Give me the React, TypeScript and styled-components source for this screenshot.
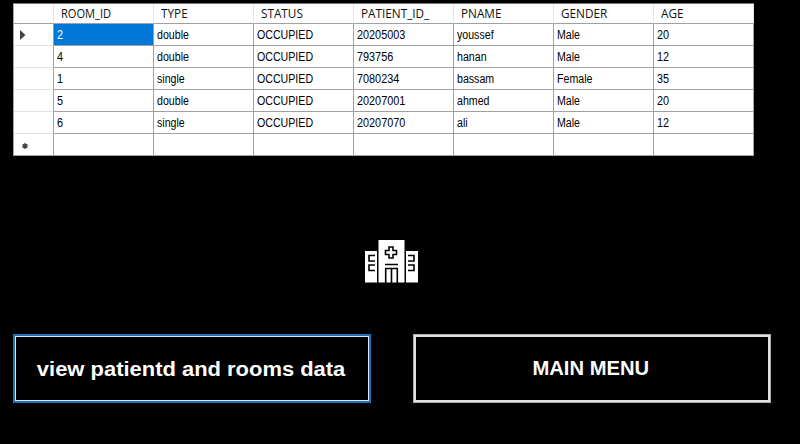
import React from 'react';
import styled, { createGlobalStyle } from 'styled-components';

const GlobalStyle = createGlobalStyle`
  body { margin: 0; background: #000; overflow: hidden; }
`;

const Page = styled.main`
  box-sizing: border-box;
  width: 800px;
  height: 444px;
  padding: 3px 0 0 13px;
  display: flex;
  flex-direction: column;
  background: #000;
`;

const DataGrid = styled.div`
  display: flex;
  flex-direction: column;
  width: 740px;
  border-top: 1px solid #777;
  border-left: 1px solid #a5a5a5;
  background: #fff;
`;

const Row = styled.div<{ $header?: boolean }>`
  display: grid;
  grid-template-columns: 40px repeat(7, 100px);
  grid-template-rows: 100%;
  height: ${(p) => (p.$header ? 20 : 22)}px;
`;

const RowHeader = styled.div<{ $last?: boolean }>`
  box-sizing: border-box;
  display: flex;
  align-items: center;
  padding: ${(p) => (p.$last ? 3 : 1)}px 0 0 6px;
  border-right: 1px solid #a0a0a0;
  border-bottom: 1px solid ${(p) => (p.$last ? '#a0a0a0' : '#e2e2e2')};
`;

const CornerCell = styled.div`
  box-sizing: border-box;
  border-right: 1px solid #e2e2e2;
  border-bottom: 1px solid #a0a0a0;
`;

const ColumnHeader = styled.div`
  box-sizing: border-box;
  padding-left: 7px;
  border-right: 1px solid #e5e5e5;
  border-bottom: 1px solid #a0a0a0;
  font: 12px/20px 'Open Sans', sans-serif;
  color: #111;
  white-space: nowrap;
`;

const Cell = styled.div<{ $selected?: boolean; $numeric?: boolean }>`
  box-sizing: border-box;
  padding-left: ${(p) => (p.$numeric ? 3 : 2.5)}px;
  border-right: 1px solid #a0a0a0;
  border-bottom: 1px solid #a0a0a0;
  background: ${(p) => (p.$selected ? '#0078d7' : '#fff')};
  color: ${(p) => (p.$selected ? '#fff' : '#000')};
  font: 12px/22px 'Liberation Sans', Arial, sans-serif;
  white-space: nowrap;
`;

const Label = styled.span<{ $scale: number }>`
  display: inline-block;
  transform: scaleX(${(p) => p.$scale});
  transform-origin: left center;
`;

const Hospital = styled.svg`
  display: block;
  margin: 84px 0 0 352px;
`;

const Actions = styled.div`
  display: flex;
  gap: 42px;
  margin-top: 50px;
`;

const ActionButton = styled.button<{ $focused?: boolean }>`
  box-sizing: border-box;
  width: 358px;
  height: 69px;
  padding: ${(p) => (p.$focused ? '1px 0 0' : '0 0 1px')};
  border: ${(p) => (p.$focused ? '2px solid #1f70b8' : '1px solid #adadad')};
  box-shadow: inset 0 0 0 ${(p) => (p.$focused ? '1px #d5e9f7' : '2px #e1e1e1')};
  background: #000;
  color: #fff;
  font: bold 20px 'Liberation Sans', Arial, sans-serif;
  white-space: nowrap;
`;

const ButtonLabel = styled.span<{ $wide?: boolean }>`
  display: inline-block;
  transform: translateX(${(p) => (p.$wide ? -0.5 : -1)}px) scaleX(${(p) => (p.$wide ? 1.097 : 1.01)});
`;

const columns = ['ROOM_ID', 'TYPE', 'STATUS', 'PATIENT_ID_', 'PNAME', 'GENDER', 'AGE'];
const records = [
  ['2', 'double', 'OCCUPIED', '20205003', 'youssef', 'Male', '20'],
  ['4', 'double', 'OCCUPIED', '793756', 'hanan', 'Male', '12'],
  ['1', 'single', 'OCCUPIED', '7080234', 'bassam', 'Female', '35'],
  ['5', 'double', 'OCCUPIED', '20207001', 'ahmed', 'Male', '20'],
  ['6', 'single', 'OCCUPIED', '20207070', 'ali', 'Male', '12'],
  ['', '', '', '', '', '', ''],
];

const isNumeric = (value: string) => /^\d+$/.test(value);

const CurrentMarker = () => (
  <svg width="6" height="10" viewBox="0 0 6 10">
    <path d="M0 0L5.5 5L0 10Z" fill="#444" />
  </svg>
);

const NewMarker = () => (
  <svg width="10" height="8" viewBox="0 0 10 8">
    <path d="M5 1.2V6.8M2.5 2.5L7.5 5.5M7.5 2.5L2.5 5.5" stroke="#444" strokeWidth="1.8" />
  </svg>
);

export default function App() {
  return (
    <>
      <GlobalStyle />
      <Page>
        <DataGrid>
          <Row $header>
            <CornerCell />
            {columns.map((name) => (
              <ColumnHeader key={name}>
                <Label $scale={name === 'ROOM_ID' ? 0.925 : 0.98}>{name}</Label>
              </ColumnHeader>
            ))}
          </Row>
          {records.map((record, r) => (
            <Row key={r}>
              <RowHeader $last={r === records.length - 1}>
                {r === 0 && <CurrentMarker />}
                {r === records.length - 1 && <NewMarker />}
              </RowHeader>
              {record.map((value, c) => (
                <Cell key={c} $selected={r === 0 && c === 0} $numeric={isNumeric(value)}>
                  <Label $scale={isNumeric(value) ? 0.905 : 0.885}>{value}</Label>
                </Cell>
              ))}
            </Row>
          ))}
        </DataGrid>
        <Hospital width="54" height="44" viewBox="0 0 54 44">
          <path d="M0 11H12V42.5H0ZM13.5 0H39.5V42.5H13.5ZM41 11H53V42.5H41Z" fill="#fff" />
          <g fill="none" stroke="#000" strokeWidth="1.6">
            <path d="M10 15.5H4V21H10M10 25H4V30.5H10M43 15.5H49V21H43M43 25H49V30.5H43" />
            <path d="M24 7H28V10.5H31.5V14.5H28V18H24V14.5H20.5V10.5H24Z" />
            <path d="M20 24.5H33M20.7 43V28.5H32.3V43M26.5 28.5V43" />
          </g>
        </Hospital>
        <Actions>
          <ActionButton $focused><ButtonLabel $wide>view patientd and rooms data</ButtonLabel></ActionButton>
          <ActionButton><ButtonLabel>MAIN MENU</ButtonLabel></ActionButton>
        </Actions>
      </Page>
    </>
  );
}
